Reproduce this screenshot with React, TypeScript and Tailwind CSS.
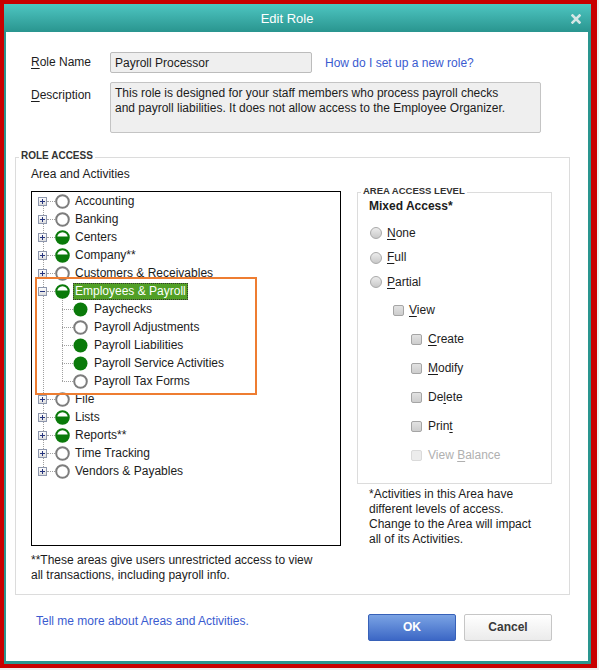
import React from 'react'

type Level = 'none' | 'half' | 'full'

interface TreeItem {
  label: string
  level: Level
  children?: { label: string; level: Level }[]
}

const areas: TreeItem[] = [
  { label: 'Accounting', level: 'none' },
  { label: 'Banking', level: 'none' },
  { label: 'Centers', level: 'half' },
  { label: 'Company**', level: 'half' },
  { label: 'Customers & Receivables', level: 'none' },
  {
    label: 'Employees & Payroll',
    level: 'half',
    children: [
      { label: 'Paychecks', level: 'full' },
      { label: 'Payroll Adjustments', level: 'none' },
      { label: 'Payroll Liabilities', level: 'full' },
      { label: 'Payroll Service Activities', level: 'full' },
      { label: 'Payroll Tax Forms', level: 'none' },
    ],
  },
  { label: 'File', level: 'none' },
  { label: 'Lists', level: 'half' },
  { label: 'Reports**', level: 'half' },
  { label: 'Time Tracking', level: 'none' },
  { label: 'Vendors & Payables', level: 'none' },
]

function AccessIcon({ level }: { level: Level }) {
  if (level === 'full') {
    return (
      <svg width="15" height="15" viewBox="0 0 15 15" className="shrink-0">
        <circle cx="7.5" cy="7.5" r="7" fill="#0a7a0a" />
      </svg>
    )
  }
  if (level === 'half') {
    return (
      <svg width="15" height="15" viewBox="0 0 15 15" className="shrink-0">
        <circle cx="7.5" cy="7.5" r="6.3" fill="#fff" />
        <path d="M1.3 6.6 A6.3 6.3 0 1 0 13.7 6.6 Z" fill="#0a7a0a" />
        <circle cx="7.5" cy="7.5" r="6.3" fill="none" stroke="#0a7a0a" strokeWidth="2" />
      </svg>
    )
  }
  return (
    <svg width="15" height="15" viewBox="0 0 15 15" className="shrink-0">
      <circle cx="7.5" cy="7.5" r="6.3" fill="#fff" stroke="#7d7d7d" strokeWidth="2" />
    </svg>
  )
}

function ExpandBox({ open }: { open?: boolean }) {
  return (
    <svg width="9" height="9" viewBox="0 0 9 9" className="shrink-0" shapeRendering="crispEdges">
      <defs>
        <linearGradient id="eb" x1="0" y1="0" x2="0" y2="1">
          <stop offset="0" stopColor="#ffffff" />
          <stop offset="1" stopColor="#dcdcdc" />
        </linearGradient>
      </defs>
      <rect x="0.5" y="0.5" width="8" height="8" fill="url(#eb)" stroke="#8e97ad" />
      <rect x="2" y="4" width="5" height="1" fill="#27367f" />
      {!open && <rect x="4" y="2" width="1" height="5" fill="#27367f" />}
    </svg>
  )
}

function Radio({ u, rest }: { u: string; rest: string }) {
  return (
    <div className="flex items-center h-[24.5px] pl-[12px]">
      <span className="w-[12px] h-[12px] rounded-full border border-[#a9a9a9] bg-linear-to-b from-[#ececec] to-[#c9c9c9]" />
      <span className="ml-[5px] text-[#1c1c1c]">
        <span className="underline underline-offset-2">{u}</span>
        {rest}
      </span>
    </div>
  )
}

function Check({
  pre = '',
  u,
  rest = '',
  indent,
  disabled,
}: {
  pre?: string
  u: string
  rest?: string
  indent: 'one' | 'two'
  disabled?: boolean
}) {
  return (
    <div className={`flex items-center h-[29px] ${indent === 'one' ? 'pl-[35px]' : 'pl-[53px]'}`}>
      <span
        className={`w-[11px] h-[11px] rounded-[2px] border ${
          disabled
            ? 'border-[#dadada] bg-[#ececec]'
            : 'border-[#a5a5a5] bg-linear-to-b from-[#e2e2e2] to-[#cdcdcd]'
        }`}
      />
      <span className={`${indent === 'one' ? 'ml-[5px]' : 'ml-[6px]'} ${disabled ? 'text-[#b0b0b0]' : 'text-[#1c1c1c]'}`}>
        {pre}
        <span className="underline underline-offset-2">{u}</span>
        {rest}
      </span>
    </div>
  )
}

export default function App() {
  return (
    <div className="min-h-screen bg-[#efefef] [font-family:'Liberation_Sans',Arial,sans-serif] text-[12px] leading-[15px] text-[#1c1c1c]">
      <div className="w-[597px] h-[668px] border-t-4 border-l-4 border-b-4 border-r-[6px] border-[#c80000] flex flex-col bg-[#2a958f]">
        {/* Title bar */}
        <div className="h-[28px] flex items-center bg-linear-to-b from-[#4ec6c2] to-[#29958f] shrink-0">
          <div className="flex-1 text-center pl-[9px] text-white text-[13px] leading-[16px] pt-[1px]">Edit Role</div>
          <div className="w-[30px] flex items-center justify-center pt-[2px]">
            <svg width="10" height="10" viewBox="0 0 10 10">
              <path d="M1.5 1.5 L8.5 8.5 M8.5 1.5 L1.5 8.5" stroke="#d6e6e5" strokeWidth="2.6" strokeLinecap="square" />
            </svg>
          </div>
        </div>

        {/* Body */}
        <div className="flex-1 bg-white ml-[2px] mr-[3px] mb-[3px] flex flex-col">
          <div className="pl-[25px] pt-[20px]">
            <div className="flex items-start">
              <div className="w-[79px] h-[21px] flex items-center">
                <span>
                  <span className="underline underline-offset-2">R</span>ole Name
                </span>
              </div>
              <div className="w-[202px] h-[21px] border border-[#bcbcbc] rounded-[2px] bg-[#efefef] pl-[4px] leading-[20px]">
                Payroll Processor
              </div>
              <span className="ml-[13px] mt-[4px] text-[#3a5bd0]">How do I set up a new role?</span>
            </div>
            <div className="flex items-start mt-[9px]">
              <div className="w-[79px] mt-[6px]">
                <span className="underline underline-offset-2">D</span>escription
              </div>
              <div className="w-[431px] h-[51px] border border-[#c4c4c4] rounded-[2px] bg-[#efefef] pl-[4px] pt-[3px] leading-[15px]">
                This role is designed for your staff members who process payroll checks
                <br />
                and payroll liabilities. It does not allow access to the Employee Organizer.
              </div>
            </div>
          </div>

          {/* Role access group */}
          <div className="relative mt-[24px] ml-[9px] w-[555px] h-[438px] border border-[#dcdcdc] flex pl-[15px]">
            <span className="absolute -top-[8px] left-[3px] bg-white px-[2px] text-[10px] leading-[12px] font-bold text-[#333]">
              ROLE ACCESS
            </span>

            <div className="w-[310px] pt-[9px]">
              <div>Area and Activities</div>
              <div className="relative mt-[9px] h-[355px] border border-black bg-white">
                <div className="absolute left-[11px] top-[9px] h-[270px] border-l border-dotted border-[#a0a0a0]" />
                <div className="absolute left-[30px] top-[106px] h-[83px] border-l border-dotted border-[#a0a0a0]" />
                <div className="relative">
                  {areas.map((a) => (
                    <React.Fragment key={a.label}>
                      <div className="flex items-center h-[18px] pl-[6px]">
                        <ExpandBox open={!!a.children} />
                        <span className="w-[8px] border-t border-dotted border-[#a0a0a0]" />
                        <AccessIcon level={a.level} />
                        {a.children ? (
                          <span className="ml-[3px] px-[1px] h-[17px] leading-[15px] bg-[#519f26] text-white border border-dotted border-[#333]">
                            {a.label}
                          </span>
                        ) : (
                          <span className="ml-[3px] px-[2px]">{a.label}</span>
                        )}
                      </div>
                      {a.children?.map((c) => (
                        <div key={c.label} className="flex items-center h-[18px] pl-[30px]">
                          <span className="w-[11px] border-t border-dotted border-[#a0a0a0]" />
                          <AccessIcon level={c.level} />
                          <span className="ml-[6px]">{c.label}</span>
                        </div>
                      ))}
                    </React.Fragment>
                  ))}
                </div>
                <div className="absolute left-[3px] top-[85px] w-[222px] h-[118px] border-2 border-[#ee7d31]" />
              </div>
              <div className="mt-[7px]">
                **These areas give users unrestricted access to view
                <br />
                all transactions, including payroll info.
              </div>
            </div>

            <div className="ml-[16px] w-[195px] pt-[34px]">
              <div className="relative h-[292px] border border-[#dcdcdc] pt-[6px]">
                <span className="absolute -top-[8px] left-[3px] bg-white px-[2px] text-[9.5px] leading-[12px] font-bold text-[#333]">
                  AREA ACCESS LEVEL
                </span>
                <div className="pl-[11px] font-bold">Mixed Access*</div>
                <div className="mt-[7px]">
                  <Radio u="N" rest="one" />
                  <Radio u="F" rest="ull" />
                  <Radio u="P" rest="artial" />
                </div>
                <div className="mt-[1px]">
                  <Check u="V" rest="iew" indent="one" />
                  <Check u="C" rest="reate" indent="two" />
                  <Check u="M" rest="odify" indent="two" />
                  <Check pre="De" u="l" rest="ete" indent="two" />
                  <Check pre="Prin" u="t" indent="two" />
                  <Check pre="View " u="B" rest="alance" indent="two" disabled />
                </div>
              </div>
              <div className="mt-[3px] pl-[12px]">
                *Activities in this Area have
                <br />
                different levels of access.
                <br />
                Change to the Area will impact
                <br />
                all of its Activities.
              </div>
            </div>
          </div>

          {/* Footer */}
          <div className="flex items-start mt-[19px] pl-[30px] pr-[36px]">
            <span className="text-[#3a5bd0]">Tell me more about Areas and Activities.</span>
            <div className="ml-auto flex gap-[8px]">
              <button className="w-[88px] h-[27px] rounded-[2px] border border-[#3761b8] bg-linear-to-b from-[#7ba3e4] to-[#3c67c5] text-white font-bold text-[12px]">
                OK
              </button>
              <button className="w-[88px] h-[27px] rounded-[2px] border border-[#c6c6c6] bg-linear-to-b from-[#ffffff] to-[#ebebeb] text-[#3a3a3a] font-bold text-[12px]">
                Cancel
              </button>
            </div>
          </div>
        </div>
      </div>
    </div>
  )
}
